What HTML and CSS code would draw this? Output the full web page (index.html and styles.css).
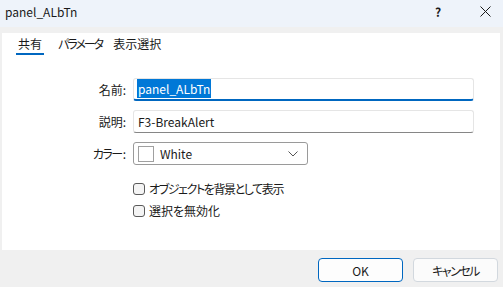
FILE: index.html
```html
<!DOCTYPE html>
<html lang="ja">
<head>
<meta charset="utf-8">
<link rel="stylesheet" href="styles.css">
</head>
<body>
<div class="window">
  <div class="titlebar">
    <span class="title">panel_ALbTn</span>
    <span class="help">?</span>
    <span class="close">
      <svg width="11" height="11" viewBox="0 0 11 11"><path d="M0.5 0.5 L10.5 10.5 M10.5 0.5 L0.5 10.5" stroke="#1a1a1a" stroke-width="1" fill="none"/></svg>
    </span>
  </div>
  <div class="frame">
    <div class="panel">
      <div class="tabs">
        <span class="tab active">共有</span>
        <span class="tab tab-params">パラメータ</span>
        <span class="tab">表示選択</span>
      </div>
      <div class="form">
        <label class="lbl">名前:</label>
        <div class="input focused"><span class="sel">panel_ALbTn</span></div>
        <label class="lbl">説明:</label>
        <div class="input">F3-BreakAlert</div>
        <label class="lbl"><span class="lbl-color">カラー</span>:</label>
        <div class="select">
          <span class="swatch"></span>
          <span class="selval">White</span>
          <svg class="chev" width="10" height="6" viewBox="0 0 10 6"><path d="M0.5 0.5 L5 5 L9.5 0.5" stroke="#555" stroke-width="1" fill="none"/></svg>
        </div>
        <span></span>
        <div class="checks">
          <div class="check"><span class="box"></span><span class="kana">オブジェクトを背景として表示</span></div>
          <div class="check"><span class="box"></span><span>選択を無効化</span></div>
        </div>
      </div>
    </div>
    <div class="footer">
      <button class="btn primary">OK</button>
      <button class="btn btn-cancel">キャンセル</button>
    </div>
  </div>
</div>
</body>
</html>
```

FILE: styles.css
```css
html, body {
  margin: 0;
  padding: 0;
}
body {
  width: 503px;
  height: 287px;
  overflow: hidden;
  font-family: "Noto Sans CJK JP", "Noto Sans", sans-serif;
  font-feature-settings: "palt";
  font-size: 12px;
  color: #1a1a1a;
  background: #f0f0f0;
}
.window {
  display: flex;
  flex-direction: column;
  height: 287px;
}
.titlebar {
  height: 27px;
  background: #eef3fa;
  display: flex;
  align-items: center;
  padding-left: 5px;
  padding-bottom: 4px;
  box-sizing: border-box;
}
.title {
  flex: 1;
  font-size: 12px;
}
.help {
  width: 12px;
  margin-right: 33px;
  font-size: 12px;
  font-weight: bold;
}
.close {
  display: flex;
  margin-right: 12px;
}
.frame {
  flex: 1;
  display: flex;
  flex-direction: column;
  padding: 6px 3px 0 2px;
}
.panel {
  background: #ffffff;
  height: 217px;
  display: flex;
  flex-direction: column;
}
.tabs {
  display: flex;
  padding-left: 14px;
  padding-top: 3px;
  height: 22px;
}
.tab {
  padding: 0 2px;
  line-height: 16px;
  height: 17px;
  border-bottom: 2px solid transparent;
}
.tab.active {
  border-bottom-color: #0067c0;
  margin-right: 12px;
}
.tab-params {
  letter-spacing: -2px;
  margin-right: 7px;
}
.form {
  display: grid;
  grid-template-columns: 124px 341px;
  column-gap: 7px;
  row-gap: 9px;
  margin-top: 20px;
  align-items: center;
}
.lbl {
  text-align: right;
}
.lbl-color {
  letter-spacing: -1.5px;
  margin-right: 1px;
}
.input {
  height: 23px;
  box-sizing: border-box;
  border: 1px solid #e5e5e5;
  border-bottom: 1px solid #868686;
  border-radius: 3px;
  padding: 0 4px;
  line-height: 21px;
  background: #fff;
}
.input.focused {
  border-bottom: 2px solid #0067c0;
  line-height: 20px;
  padding-left: 3px;
}
.sel {
  background: #0078d7;
  color: #fff;
  padding: 1px 1px;
}
.select {
  width: 175px;
  height: 23px;
  box-sizing: border-box;
  border: 1px solid #9a9a9a;
  border-radius: 3px;
  display: flex;
  align-items: center;
  padding-left: 4px;
  padding-right: 9px;
}
.swatch {
  width: 14px;
  height: 14px;
  border: 1px solid #a0a0a0;
  background: #fff;
  margin-right: 6px;
}
.selval {
  flex: 1;
}
.checks {
  display: flex;
  flex-direction: column;
  gap: 6px;
  margin-top: 7px;
}
.check {
  display: flex;
  align-items: center;
  gap: 4px;
  height: 16px;
  line-height: 16px;
}
.kana {
  letter-spacing: -1.4px;
}
.box {
  width: 10px;
  height: 10px;
  border: 1px solid #5a5a5a;
  border-radius: 3px;
  background: #f4f4f4;
}
.footer {
  flex: 1;
  display: flex;
  justify-content: flex-end;
  align-items: flex-start;
  gap: 10px;
  padding-top: 8px;
  padding-right: 2px;
}
.btn {
  width: 85px;
  height: 24px;
  font-family: "Noto Sans CJK JP", "Noto Sans", sans-serif;
  font-feature-settings: "palt";
  font-size: 12px;
  color: #1a1a1a;
  background: #fbfbfb;
  border: 1px solid #d2d8de;
  border-radius: 4px;
  padding: 0;
}
.btn.primary {
  border-color: #0067c0;
  background: #fdfdfd;
}
.btn-cancel {
  letter-spacing: -1.5px;
}
```
